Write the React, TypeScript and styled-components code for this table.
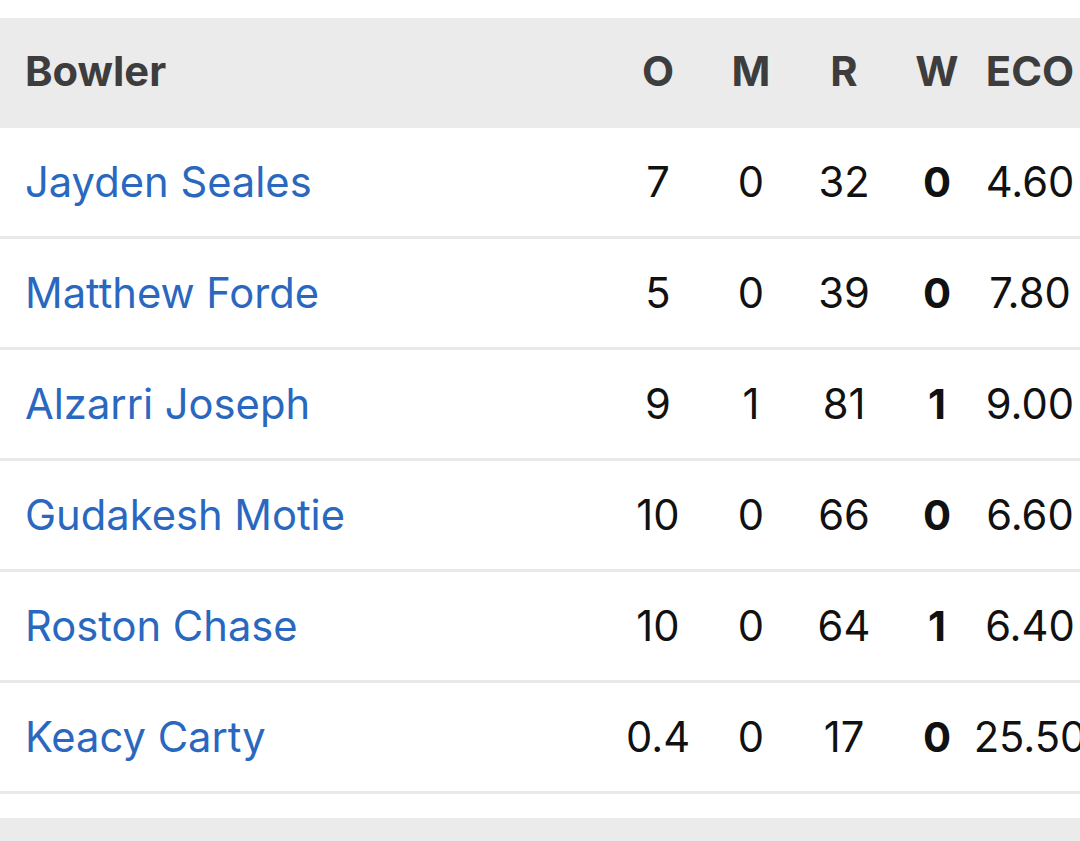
import React from "react";
import styled, { createGlobalStyle } from "styled-components";

const Global = createGlobalStyle`
  html, body { margin: 0; padding: 0; background: #fff; overflow: hidden; }
  body { font-family: Inter, "Noto Sans", "Liberation Sans", sans-serif; }
`;

const Page = styled.div`
  width: 1080px;
  padding-top: 18px;
`;

const Row = styled.div<{ $head?: boolean }>`
  display: grid;
  grid-template-columns: 1fr repeat(5, 93px);
  align-items: center;
  box-sizing: border-box;
  padding: ${(p) => (p.$head ? "0 3.5px 4px 25px" : "0 3.5px 0 25px")};
  height: ${(p) => (p.$head ? "110px" : "111px")};
  background: ${(p) => (p.$head ? "#ebebeb" : "#fff")};
  border-bottom: ${(p) => (p.$head ? "none" : "3px solid #e9e9e9")};
  font-size: 41.7px;
`;

const HeadCell = styled.div<{ $left?: boolean }>`
  font-weight: 700;
  color: #3d3d3d;
  text-align: ${(p) => (p.$left ? "left" : "center")};
  white-space: nowrap;
`;

const Name = styled.div`
  color: #2a68bf;
  white-space: nowrap;
`;

const Num = styled.div<{ $bold?: boolean }>`
  color: #111;
  font-weight: ${(p) => (p.$bold ? 700 : 400)};
  white-space: nowrap;
  display: flex;
  justify-content: center;
`;

const Spacer = styled.div`
  height: 24px;
`;

const Footer = styled.div`
  height: 40px;
  background: #ebebeb;
`;

const data = [
  ["Jayden Seales", "7", "0", "32", "0", "4.60"],
  ["Matthew Forde", "5", "0", "39", "0", "7.80"],
  ["Alzarri Joseph", "9", "1", "81", "1", "9.00"],
  ["Gudakesh Motie", "10", "0", "66", "0", "6.60"],
  ["Roston Chase", "10", "0", "64", "1", "6.40"],
  ["Keacy Carty", "0.4", "0", "17", "0", "25.50"],
];

export default function App() {
  return (
    <Page>
      <Global />
      <Row $head>
        <HeadCell $left>Bowler</HeadCell>
        <HeadCell>O</HeadCell>
        <HeadCell>M</HeadCell>
        <HeadCell>R</HeadCell>
        <HeadCell>W</HeadCell>
        <HeadCell>ECO</HeadCell>
      </Row>
      {data.map((r) => (
        <Row key={r[0]}>
          <Name>{r[0]}</Name>
          <Num>{r[1]}</Num>
          <Num>{r[2]}</Num>
          <Num>{r[3]}</Num>
          <Num $bold>{r[4]}</Num>
          <Num>{r[5]}</Num>
        </Row>
      ))}
      <Spacer />
      <Footer />
    </Page>
  );
}
